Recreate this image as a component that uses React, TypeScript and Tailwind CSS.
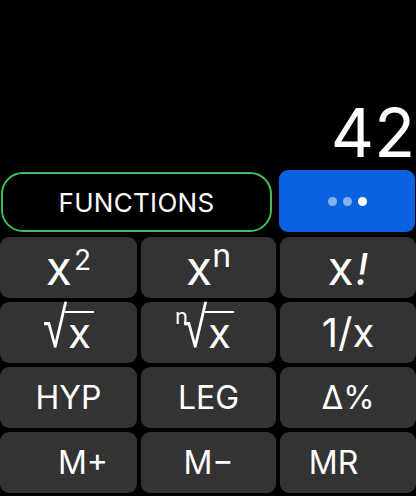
import type { ReactNode } from 'react';

function Key({ children, className = '' }: { children: ReactNode; className?: string }) {
  return (
    <div
      className={`flex h-[61px] items-center justify-center rounded-[9px] bg-[#333333] text-white ${className}`}
    >
      {children}
    </div>
  );
}

function Radical({ index }: { index?: string }) {
  return (
    <span className="relative mt-[2px] inline-flex items-end leading-none">
      {index && (
        <span className="absolute -left-[8px] top-[-6px] text-[22px] leading-none">{index}</span>
      )}
      <span className="inline-block origin-bottom scale-y-[1.3] font-['DejaVu_Sans',sans-serif] text-[44px] font-extralight leading-none">
        √
      </span>
      <span className="-ml-[2px] mb-[7px] border-t-[2px] border-white pl-[3px] pr-[3px] pt-[4px] text-[42px] leading-[32px]">
        x
      </span>
    </span>
  );
}

export default function App() {
  return (
    <div className="flex h-[496px] w-[416px] flex-col overflow-hidden bg-black font-['Inter',sans-serif] text-white">
      <div className="flex h-[170px] items-end justify-end pb-[4px] pr-[1px]">
        <span className="text-[67px] font-normal leading-none">42</span>
      </div>

      <div className="flex gap-[7px]">
        <div className="ml-[1px] mt-[2px] flex h-[60px] w-[271px] items-center justify-center rounded-[22px] border-[2px] border-[#40c057] text-[26px] tracking-[0.3px]">
          FUNCTIONS
        </div>
        <div className="flex h-[62px] w-[136px] items-center justify-center gap-[6px] rounded-[9px] bg-[#0b62e0]">
          <span className="h-[9px] w-[9px] rounded-full bg-white/50" />
          <span className="h-[9px] w-[9px] rounded-full bg-white/50" />
          <span className="h-[9px] w-[9px] rounded-full bg-white" />
        </div>
      </div>

      <div className="mt-[5px] grid grid-cols-[137px_135px_136px] gap-[4px]">
        <Key>
          <span className="inline-flex items-start leading-none">
            <span className="text-[48px] leading-none">x</span>
            <span className="ml-[2px] mt-[2px] text-[28px] leading-none">2</span>
          </span>
        </Key>
        <Key>
          <span className="inline-flex items-start leading-none">
            <span className="text-[48px] leading-none">x</span>
            <span className="-mt-[4px] text-[32px] leading-none">n</span>
          </span>
        </Key>
        <Key>
          <span className="text-[48px] leading-none">
            x<span className="ml-[2px] italic text-[44px]">!</span>
          </span>
        </Key>

        <Key>
          <Radical />
        </Key>
        <Key>
          <Radical index="n" />
        </Key>
        <Key>
          <span className="text-[40px] leading-none">1/x</span>
        </Key>

        <Key>
          <span className="text-[32px] leading-none">HYP</span>
        </Key>
        <Key>
          <span className="text-[32px] leading-none">LEG</span>
        </Key>
        <Key>
          <span className="text-[32px] leading-none">Δ%</span>
        </Key>

        <Key className="pl-[29px]">
          <span className="text-[32px] leading-none">M+</span>
        </Key>
        <Key>
          <span className="text-[32px] leading-none">M−</span>
        </Key>
        <Key className="pr-[29px]">
          <span className="text-[32px] leading-none">MR</span>
        </Key>
      </div>
    </div>
  );
}
